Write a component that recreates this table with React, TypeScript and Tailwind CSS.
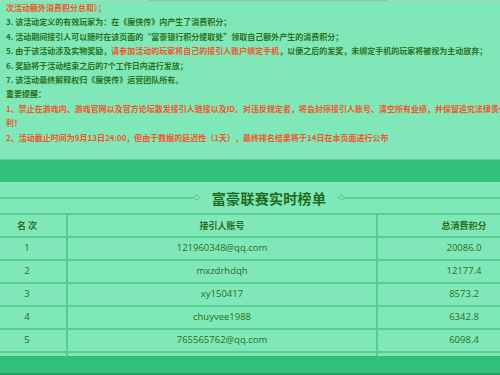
import React from "react";

const green = "text-[#2c721d]";
const red = "text-[#f2552c]";

const rows = [
  ["1", "121960348@qq.com", "20086.0"],
  ["2", "mxzdrhdqh", "12177.4"],
  ["3", "xy150417", "8573.2"],
  ["4", "chuyvee1988", "6342.8"],
  ["5", "765565762@qq.com", "6098.4"],
];

export default function App() {
  return (
    <div className="w-[500px] h-[375px] overflow-hidden bg-[#80e8b8] flex flex-col" style={{ fontFamily: '"Noto Sans CJK SC", sans-serif' }}>
      <div className="h-[1px] flex shrink-0">
        <div className="w-[148px] bg-[#a9d8bf]" />
        <div className="w-[240px] bg-[#97c2aa]" />
        <div className="flex-1 bg-[#a9d8bf]" />
      </div>
      <div className="w-[528px] shrink-0 pl-[6px] pt-[0px] text-[8px] leading-[14.4px] font-bold">
        <p className={red}>次活动额外消费积分总和）；</p>
        <p className={green}>3. 该活动定义的有效玩家为：在《魔侠传》内产生了消费积分；</p>
        <p className={green}>4. 活动期间接引人可以随时在该页面的“富豪银行积分提取处”领取自己额外产生的消费积分；</p>
        <p className={`${green} whitespace-nowrap`}>
          5. 由于该活动涉及实物奖励，<span className={red}>请参加活动的玩家将自己的接引人账户绑定手机</span>，以便之后的发奖，未绑定手机的玩家将被视为主动放弃；
        </p>
        <p className={green}>6. 奖励将于活动结束之后的7个工作日内进行发放；</p>
        <p className={green}>7. 该活动最终解释权归《魔侠传》运营团队所有。</p>
        <p className={green}>重要提醒：</p>
        <p className={red}>1、禁止在游戏内、游戏官网以及官方论坛散发接引人链接以及ID。对违反规定者，将会封停接引人账号、清空所有业绩，并保留追究法律责任的权利！</p>
        <p className={red}>2、活动截止时间为9月13日24:00，但由于数据的延迟性（1天），最终排名结果将于14日在本页面进行公布</p>
      </div>
      <div className="h-[14px] shrink-0" />
      <div className="h-[23px] shrink-0 bg-[#33c27c] border-t border-[#5ad59a]" />
      <div className="ml-[-12px] w-[562px] shrink-0 flex flex-col">
        <div className="h-[31px] flex items-center">
          <div className="flex-1 h-[2px] bg-[#55cf91]" />
          <div className="w-[5px] h-[5px] rotate-45 border border-[#55cf91] mx-[1px]" />
          <div className="px-[12px] text-[14px] font-bold text-[#1e6a1c] leading-none tracking-[0.3px]">富豪联赛实时榜单</div>
          <div className="w-[5px] h-[5px] rotate-45 border border-[#55cf91] mx-[1px]" />
          <div className="flex-1 h-[2px] bg-[#55cf91]" />
        </div>
        <div className="border-t-2 border-[#55cf91] text-[#2a6e1c]" style={{ fontFamily: '"Open Sans", "Noto Sans CJK SC", sans-serif' }}>
          <div className="grid grid-cols-[80px_310px_172px] h-[23px] border-b-2 border-[#55cf91] text-[9px] font-bold">
            <div className="flex items-center justify-center border-r-2 border-[#55cf91]" style={{ fontFamily: '"Noto Sans CJK SC", sans-serif' }}>名 次</div>
            <div className="flex items-center justify-center border-r-2 border-[#55cf91]" style={{ fontFamily: '"Noto Sans CJK SC", sans-serif' }}>接引人账号</div>
            <div className="flex items-center justify-center" style={{ fontFamily: '"Noto Sans CJK SC", sans-serif' }}>总消费积分</div>
          </div>
          {rows.map((r) => (
            <div key={r[0]} className="grid grid-cols-[80px_310px_172px] h-[23px] border-b-2 border-[#55cf91] text-[9.5px]">
              <div className="flex items-center justify-center border-r-2 border-[#55cf91]">{r[0]}</div>
              <div className="flex items-center justify-center border-r-2 border-[#55cf91]">{r[1]}</div>
              <div className="flex items-center justify-center">{r[2]}</div>
            </div>
          ))}
          <div className="grid grid-cols-[80px_310px_172px] h-[3px]">
            <div className="border-r-2 border-[#55cf91]" />
            <div className="border-r-2 border-[#55cf91]" />
            <div />
          </div>
        </div>
      </div>
      <div className="flex-1 bg-[#32c07a] border-b-2 border-[#22a263]" />
    </div>
  );
}
